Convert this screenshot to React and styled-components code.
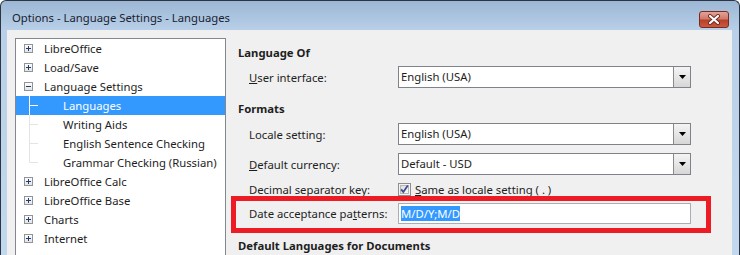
import React from "react";
import styled, { createGlobalStyle } from "styled-components";

const GlobalStyle = createGlobalStyle`
    body {
        margin: 0;
        background: #ffffff;
        font-family: "Noto Sans", "Open Sans", sans-serif;
        font-size: 11.3px;
        color: #1e1e1e;
    }
`;

const Window = styled.div`
    box-sizing: border-box;
    width: 740px;
    height: 255px;
    display: flex;
    flex-direction: column;
    border: 1px solid #2d3540;
    border-bottom: none;
    border-radius: 6px 6px 0 0;
    padding: 0 7px 0 6px;
    background: linear-gradient(180deg, #9cb7d5 0px, #b9d0e8 30px, #c2d8ee 100%);
    overflow: hidden;
`;

const TitleBar = styled.div`
    height: 29px;
    flex-shrink: 0;
    display: flex;
    justify-content: space-between;
    align-items: flex-start;
    padding-left: 5px;
`;

const Title = styled.div`
    margin-top: 9px;
    font-size: 11.3px;
    line-height: 16px;
    color: #1a2230;
`;

const CloseButton = styled.div`
    box-sizing: border-box;
    width: 30px;
    height: 17px;
    margin-top: 10px;
    margin-right: 3px;
    border: 1px solid #7c2a20;
    border-radius: 3px;
    background: linear-gradient(180deg, #e4a296 0%, #d27a68 45%, #b8402a 55%, #c85a3e 100%);
    display: flex;
    align-items: center;
    justify-content: center;
`;

const Body = styled.div`
    flex: 1;
    display: flex;
    background: #f0f0f0;
    padding: 8px 0 0 8px;
    min-height: 0;
`;

const TreeBox = styled.div`
    box-sizing: border-box;
    width: 211px;
    height: 240px;
    flex-shrink: 0;
    border: 1px solid #828790;
    background: #ffffff;
`;

const TreeRow = styled.div`
    height: 19px;
    display: flex;
    align-items: center;
    padding-left: 8px;
    background: ${(p) => (p.$selected ? "#3399ff" : "transparent")};
    color: ${(p) => (p.$selected ? "#ffffff" : "#1e1e1e")};
`;

const Slot = styled.div`
    width: 20px;
    height: 19px;
    flex-shrink: 0;
    display: flex;
    align-items: center;
`;

const TreeLabel = styled.span`
    margin-left: ${(p) => (p.$child ? "19px" : "0")};
    white-space: nowrap;
`;

const Panel = styled.div`
    flex: 1;
    display: flex;
    flex-direction: column;
    padding: 7px 0 0 12px;
`;

const Heading = styled.div`
    height: 16px;
    line-height: 16px;
    font-weight: 700;
    margin-top: ${(p) => p.$gap || 0}px;
`;

const FieldRow = styled.div`
    display: grid;
    grid-template-columns: 149px 293px;
    align-items: center;
    height: ${(p) => p.$h || 22}px;
    margin-left: 11px;
    margin-top: ${(p) => p.$gap || 0}px;
`;

const Label = styled.span`
    white-space: nowrap;
`;

const Key = styled.span`
    text-decoration: underline;
`;

const Dropdown = styled.div`
    box-sizing: border-box;
    height: 22px;
    display: flex;
    border: 1px solid #7f8289;
    background: #ffffff;
`;

const DropValue = styled.div`
    flex: 1;
    padding-left: 2px;
    line-height: 20px;
`;

const DropButton = styled.div`
    box-sizing: border-box;
    width: 17px;
    border-left: 1px solid #8a8a8a;
    background: linear-gradient(180deg, #f4f4f4 0%, #e6e6e6 50%, #d6d6d6 100%);
    display: flex;
    align-items: center;
    justify-content: center;
`;

const CheckLine = styled.label`
    display: flex;
    align-items: center;
    gap: 4px;
`;

const AnnotationFrame = styled.div`
    box-sizing: border-box;
    width: 480px;
    margin-left: -7px;
    margin-top: -1px;
    border: 5px solid #ed1c24;
    padding: 2px 15px 4px 2px;
`;

const TextField = styled.div`
    box-sizing: border-box;
    height: 21px;
    border: 1px solid #abadb3;
    background: #ffffff;
    padding-left: 2px;
    display: flex;
    align-items: center;
`;

const Selected = styled.span`
    background: #3399ff;
    color: #ffffff;
    line-height: 15px;
`;

const ExpandBox = ({ open }) => (
    <svg width="9" height="9" viewBox="0 0 9 9">
        <defs>
            <linearGradient id="eb" x1="0" y1="0" x2="0" y2="1">
                <stop offset="0" stopColor="#ffffff" />
                <stop offset="1" stopColor="#e2e2e2" />
            </linearGradient>
        </defs>
        <rect x="0.5" y="0.5" width="8" height="8" fill="url(#eb)" stroke="#919397" />
        <path d="M2 4.5H7" stroke="#1f3c74" />
        {!open && <path d="M4.5 2V7" stroke="#1f3c74" />}
    </svg>
);

const Connector = ({ last, selected }) => (
    <svg width="20" height="19" viewBox="0 0 20 19">
        <path
            d={last ? "M5.5 0V9.5H14" : "M5.5 0V19M5.5 9.5H14"}
            stroke={selected ? "#ffffff" : "#e4e4e4"}
            fill="none"
        />
    </svg>
);

const DropArrow = () => (
    <svg width="7" height="4" viewBox="0 0 7 4">
        <path d="M0 0H7L3.5 4Z" fill="#000000" />
    </svg>
);

const CheckBox = () => (
    <svg width="13" height="13" viewBox="0 0 13 13">
        <defs>
            <linearGradient id="cb" x1="0" y1="0" x2="1" y2="1">
                <stop offset="0" stopColor="#dcdcdc" />
                <stop offset="1" stopColor="#fafafa" />
            </linearGradient>
        </defs>
        <rect x="0.5" y="0.5" width="12" height="12" fill="#f4f4f4" stroke="#8e8f8f" />
        <rect x="2.5" y="2.5" width="8" height="8" fill="url(#cb)" stroke="#b7b7b7" />
        <path d="M3.2 6.4L5.3 9L9.8 2.6" stroke="#3c4f93" strokeWidth="1.8" fill="none" />
    </svg>
);

const CloseGlyph = () => (
    <svg width="14" height="11" viewBox="0 0 14 11">
        <path d="M3 2L11 9M11 2L3 9" stroke="#6e2a22" strokeWidth="4" strokeLinecap="round" />
        <path d="M3 2L11 9M11 2L3 9" stroke="#ffffff" strokeWidth="2.2" strokeLinecap="round" />
    </svg>
);

const tree = [
    { label: "LibreOffice", kind: "closed" },
    { label: "Load/Save", kind: "closed" },
    { label: "Language Settings", kind: "open" },
    { label: "Languages", kind: "child", selected: true },
    { label: "Writing Aids", kind: "child" },
    { label: "English Sentence Checking", kind: "child" },
    { label: "Grammar Checking (Russian)", kind: "child", last: true },
    { label: "LibreOffice Calc", kind: "closed" },
    { label: "LibreOffice Base", kind: "closed" },
    { label: "Charts", kind: "closed" },
    { label: "Internet", kind: "closed" },
];

const Select = ({ value }) => (
    <Dropdown>
        <DropValue>{value}</DropValue>
        <DropButton>
            <DropArrow />
        </DropButton>
    </Dropdown>
);

const App = () => {
    return (
        <>
            <GlobalStyle />
            <Window>
                <TitleBar>
                    <Title>Options - Language Settings - Languages</Title>
                    <CloseButton>
                        <CloseGlyph />
                    </CloseButton>
                </TitleBar>
                <Body>
                    <TreeBox>
                        {tree.map((item) => (
                            <TreeRow key={item.label} $selected={item.selected}>
                                <Slot>
                                    {item.kind === "child" ? (
                                        <Connector last={item.last} selected={item.selected} />
                                    ) : (
                                        <ExpandBox open={item.kind === "open"} />
                                    )}
                                </Slot>
                                <TreeLabel $child={item.kind === "child"}>{item.label}</TreeLabel>
                            </TreeRow>
                        ))}
                    </TreeBox>
                    <Panel>
                        <Heading>Language Of</Heading>
                        <FieldRow $gap={5}>
                            <Label>
                                <Key>U</Key>ser interface:
                            </Label>
                            <Select value="English (USA)" />
                        </FieldRow>
                        <Heading $gap={13}>Formats</Heading>
                        <FieldRow $gap={6}>
                            <Label>Locale setting:</Label>
                            <Select value="English (USA)" />
                        </FieldRow>
                        <FieldRow $gap={8}>
                            <Label>
                                <Key>D</Key>efault currency:
                            </Label>
                            <Select value="Default - USD" />
                        </FieldRow>
                        <FieldRow $gap={6} $h={16}>
                            <Label>Decimal separator key:</Label>
                            <CheckLine>
                                <CheckBox />
                                <span>
                                    <Key>S</Key>ame as locale setting ( . )
                                </span>
                            </CheckLine>
                        </FieldRow>
                        <AnnotationFrame>
                            <FieldRow $h={21}>
                                <Label>
                                    Date acceptance pa<Key>t</Key>terns:
                                </Label>
                                <TextField>
                                    <Selected>M/D/Y;M/D</Selected>
                                </TextField>
                            </FieldRow>
                        </AnnotationFrame>
                        <Heading $gap={5}>Default Languages for Documents</Heading>
                    </Panel>
                </Body>
            </Window>
        </>
    );
};

export default App;
